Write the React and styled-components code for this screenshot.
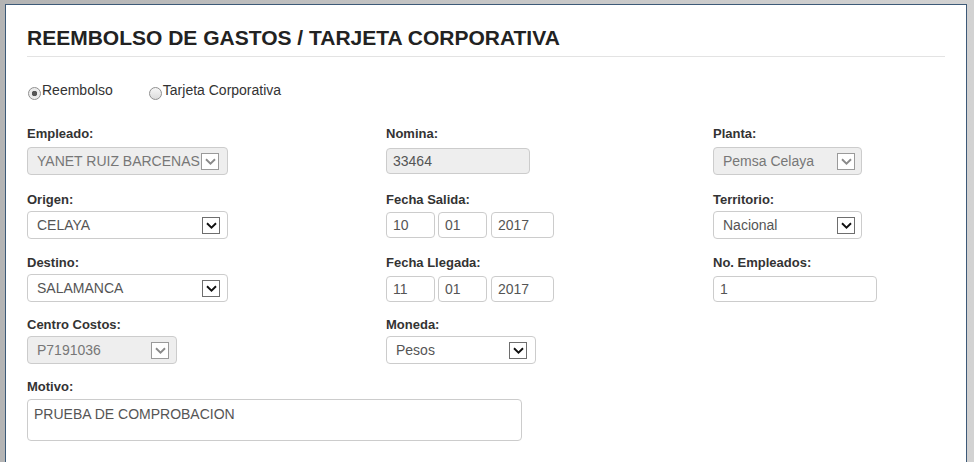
import React from 'react';
import styled, { createGlobalStyle } from 'styled-components';

const GlobalStyle = createGlobalStyle`
  html, body {
    margin: 0;
    padding: 0;
    height: 100%;
    overflow: hidden;
  }
  body {
    background: linear-gradient(90deg, #b4b4b4 0%, #c6c6c6 50%, #d2d2d2 100%);
    font-family: "Liberation Sans", Arial, sans-serif;
  }
`;

function Chevron({ disabled }) {
  return (
    <ArrowBox disabled={disabled}>
      <svg width="11" height="7" viewBox="0 0 11 7">
        <path
          d="M1 1.2 L5.5 5.6 L10 1.2"
          fill="none"
          stroke={disabled ? '#8a8a8a' : '#111'}
          strokeWidth="1.9"
        />
      </svg>
    </ArrowBox>
  );
}

function Select({ value, width, disabled, arrowGap = 7 }) {
  return (
    <SelectBox width={width} disabled={disabled}>
      <SelectText>{value}</SelectText>
      <ArrowSlot gap={arrowGap}>
        <Chevron disabled={disabled} />
      </ArrowSlot>
    </SelectBox>
  );
}

function Radio({ checked, children }) {
  return (
    <RadioLabel>
      <RadioDot checked={checked} />
      {children}
    </RadioLabel>
  );
}

export default function App() {
  return (
    <>
      <GlobalStyle />
      <Panel>
        <Title>REEMBOLSO DE GASTOS / TARJETA CORPORATIVA</Title>
        <Rule />
        <RadioRow>
          <Radio checked>Reembolso</Radio>
          <Radio>Tarjeta Corporativa</Radio>
        </RadioRow>

        <Row top={28}>
          <Field>
            <Label gap={6}>Empleado:</Label>
            <Select value="YANET RUIZ BARCENAS" width={201} disabled arrowGap={8} />
          </Field>
          <Field>
            <Label gap={7}>Nomina:</Label>
            <Input width={144} disabled value="33464" readOnly />
          </Field>
          <Field>
            <Label gap={6}>Planta:</Label>
            <Select value="Pemsa Celaya" width={149} disabled arrowGap={6} />
          </Field>
        </Row>

        <Row top={17}>
          <Field>
            <Label>Origen:</Label>
            <Select value="CELAYA" width={201} />
          </Field>
          <Field>
            <Label gap={5}>Fecha Salida:</Label>
            <DateGroup>
              <Input width={49} value="10" readOnly />
              <Input width={49} value="01" readOnly />
              <Input width={63} value="2017" readOnly />
            </DateGroup>
          </Field>
          <Field>
            <Label>Territorio:</Label>
            <Select value="Nacional" width={149} arrowGap={6} />
          </Field>
        </Row>

        <Row top={16}>
          <Field>
            <Label>Destino:</Label>
            <Select value="SALAMANCA" width={201} />
          </Field>
          <Field>
            <Label gap={6}>Fecha Llegada:</Label>
            <DateGroup>
              <Input width={49} value="11" readOnly />
              <Input width={49} value="01" readOnly />
              <Input width={63} value="2017" readOnly />
            </DateGroup>
          </Field>
          <Field>
            <Label gap={6}>No. Empleados:</Label>
            <Input width={164} value="1" readOnly />
          </Field>
        </Row>

        <Row top={15}>
          <Field>
            <Label>Centro Costos:</Label>
            <Select value="P7191036" width={150} disabled />
          </Field>
          <Field>
            <Label>Moneda:</Label>
            <Select value="Pesos" width={150} arrowGap={8} />
          </Field>
          <Field />
        </Row>

        <Row top={15}>
          <Wide>
            <Label gap={5}>Motivo:</Label>
            <TextArea value="PRUEBA DE COMPROBACION" readOnly />
          </Wide>
        </Row>
      </Panel>
    </>
  );
}

const Panel = styled.div`
  box-sizing: border-box;
  margin: 4px 0 0 5px;
  width: 962px;
  height: 470px;
  background: #fff;
  border: 1px solid #3d5a78;
  border-bottom: none;
  padding: 21px 20px 0 21px;
  color: #333;
`;

const Title = styled.h1`
  margin: 0;
  font-size: 21px;
  line-height: 24px;
  font-weight: 700;
  color: #222;
`;

const Rule = styled.div`
  height: 1px;
  margin-top: 6px;
  width: 918px;
  background: #e3e3e3;
`;

const RadioRow = styled.div`
  display: flex;
  gap: 36px;
  margin-top: 25px;
  padding-left: 1px;
`;

const RadioLabel = styled.label`
  display: flex;
  align-items: flex-end;
  font-size: 14px;
  line-height: 16px;
  color: #333;
`;

const RadioDot = styled.span`
  box-sizing: border-box;
  width: 13px;
  height: 13px;
  margin: 0 1px -2px 0;
  border-radius: 50%;
  border: 1px solid #8f8f8f;
  background: ${(p) =>
    p.checked
      ? 'radial-gradient(circle, #555 0 2.5px, #e8e8e8 3px, #f4f4f4 100%)'
      : 'linear-gradient(180deg, #f6f6f6, #dcdcdc)'};
`;

const Row = styled.div`
  display: grid;
  grid-template-columns: 359px 327px 1fr;
  margin-top: ${(p) => p.top}px;
`;

const Field = styled.div`
  display: flex;
  flex-direction: column;
  align-items: flex-start;
`;

const Wide = styled(Field)`
  grid-column: 1 / 3;
`;

const Label = styled.div`
  font-size: 13px;
  line-height: 15px;
  font-weight: 700;
  color: #333;
  margin-bottom: ${(p) => (p.gap != null ? p.gap : 4)}px;
`;

const SelectBox = styled.div`
  box-sizing: border-box;
  display: flex;
  align-items: center;
  width: ${(p) => p.width}px;
  height: 28px;
  border: 1px solid #ccc;
  border-radius: 4px;
  background: ${(p) => (p.disabled ? '#eee' : '#fff')};
  color: ${(p) => (p.disabled ? '#777' : '#555')};
  padding-left: 9px;
  font-size: 14px;
  overflow: hidden;
`;

const SelectText = styled.span`
  flex: 1;
  white-space: nowrap;
  overflow: hidden;
`;

const ArrowSlot = styled.span`
  display: flex;
  margin-right: ${(p) => p.gap}px;
`;

const ArrowBox = styled.span`
  box-sizing: border-box;
  display: flex;
  align-items: center;
  justify-content: center;
  width: 18px;
  height: 17px;
  border: 1px solid ${(p) => (p.disabled ? '#9a9a9a' : '#6e6e6e')};
  background: #fff;
`;

const Input = styled.input`
  box-sizing: border-box;
  width: ${(p) => p.width}px;
  height: 26px;
  border: 1px solid #ccc;
  border-radius: 4px;
  background: ${(p) => (p.disabled ? '#eee' : '#fff')};
  color: #555;
  font-family: "Liberation Sans", Arial, sans-serif;
  font-size: 14px;
  padding: 0 6px;
  outline: none;
`;

const DateGroup = styled.div`
  display: flex;
  gap: 3px;
  & > input:last-child {
    margin-left: 1px;
  }
`;

const TextArea = styled.textarea`
  box-sizing: border-box;
  width: 495px;
  height: 42px;
  border: 1px solid #ccc;
  border-radius: 4px;
  resize: none;
  padding: 6px 6px;
  font-family: "Liberation Sans", Arial, sans-serif;
  font-size: 14px;
  color: #555;
  outline: none;
`;
